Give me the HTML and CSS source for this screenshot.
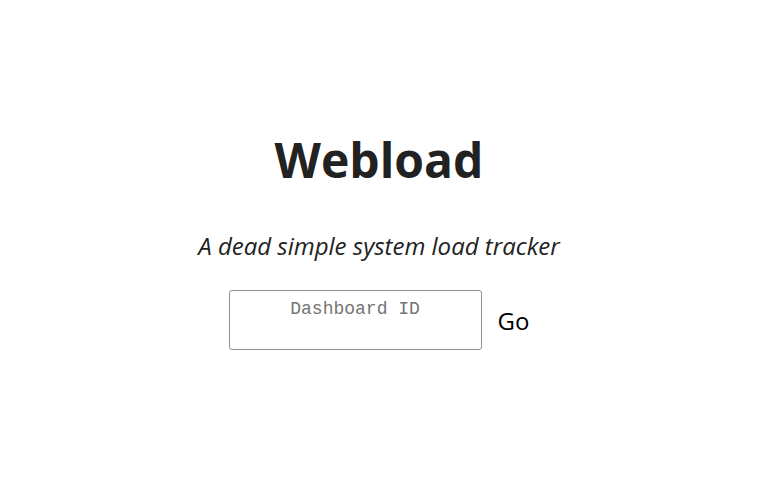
FILE: index.html
```html
<!DOCTYPE html>
<html>
<head>
<meta charset="utf-8">
<link rel="stylesheet" href="styles.css">
</head>
<body>
<main class="page">
  <h1 class="title">Webload</h1>
  <p class="tagline">A dead simple system load tracker</p>
  <form class="go-form">
    <textarea class="dash-input" placeholder="Dashboard ID"></textarea>
    <button type="button" class="go-btn">Go</button>
  </form>
</main>
</body>
</html>
```
FILE: styles.css
```css
html, body {
  margin: 0;
  padding: 0;
  background: #ffffff;
}
body {
  font-family: "Open Sans", sans-serif;
  color: #222222;
}
.page {
  display: flex;
  flex-direction: column;
  align-items: center;
  padding-top: 128px;
  padding-right: 4px;
}
.title {
  margin: 0;
  font-size: 48px;
  font-weight: 700;
  line-height: 64px;
}
.tagline {
  margin: 38px 0 0;
  font-size: 24px;
  font-style: italic;
  line-height: 32px;
}
.go-form {
  display: flex;
  align-items: center;
  gap: 16px;
  margin-top: 28px;
}
.dash-input {
  box-sizing: border-box;
  width: 253px;
  height: 60px;
  border: 1px solid #8f8f9d;
  border-radius: 3px;
  padding: 8px 8px;
  font-family: "Liberation Mono", monospace;
  font-size: 18px;
  text-align: center;
  resize: none;
}
.dash-input::placeholder {
  color: #757575;
}
.go-btn {
  background: none;
  border: none;
  padding: 0;
  font-family: "Open Sans", sans-serif;
  font-size: 24px;
  color: #000000;
}
```
